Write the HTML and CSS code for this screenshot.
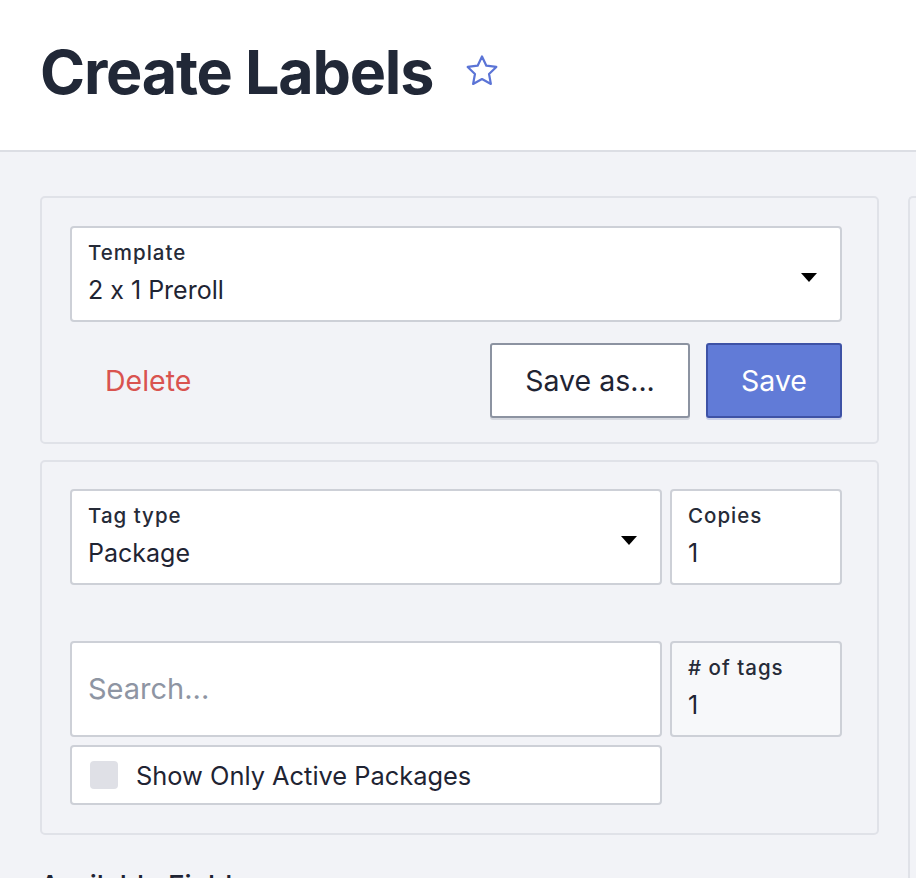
FILE: index.html
```html
<!DOCTYPE html>
<html lang="en">
<head>
<meta charset="utf-8">
<title>Create Labels</title>
<link rel="stylesheet" href="styles.css">
</head>
<body>
<header class="page-header">
  <h1 class="page-title">Create Labels</h1>
  <button class="fav-btn" aria-label="Favorite">
    <svg width="38" height="38" viewBox="0 0 24 24" fill="none" stroke="#5b74d6" stroke-width="1.4" stroke-linejoin="round"><path d="M12 2.8l2.75 5.85 6.3.8-4.6 4.4 1.15 6.3L12 17.1l-5.6 3.05 1.15-6.3-4.6-4.4 6.3-.8z"/></svg>
  </button>
</header>
<main class="layout">
  <div class="left-col">
    <section class="card">
      <div class="field field-select">
        <div class="field-text">
          <span class="field-label">Template</span>
          <span class="field-value">2 x 1 Preroll</span>
        </div>
        <span class="caret"></span>
      </div>
      <div class="actions">
        <button class="btn-link">Delete</button>
        <div class="actions-right">
          <button class="btn btn-secondary">Save as...</button>
          <button class="btn btn-primary">Save</button>
        </div>
      </div>
    </section>
    <section class="card card-tags">
      <div class="row">
        <div class="field field-select grow">
          <div class="field-text">
            <span class="field-label">Tag type</span>
            <span class="field-value">Package</span>
          </div>
          <span class="caret"></span>
        </div>
        <div class="field small">
          <div class="field-text">
            <span class="field-label">Copies</span>
            <span class="field-value">1</span>
          </div>
        </div>
      </div>
      <div class="row row-search">
        <div class="field grow search">
          <span class="placeholder">Search...</span>
        </div>
        <div class="field small disabled">
          <div class="field-text">
            <span class="field-label">#&nbsp;of tags</span>
            <span class="field-value">1</span>
          </div>
        </div>
      </div>
      <div class="row row-check">
        <label class="check-row grow">
          <span class="checkbox"></span>
          <span class="check-text">Show Only Active Packages</span>
        </label>
        <div class="small spacer"></div>
      </div>
    </section>
    <h2 class="section-title">Available Fields</h2>
  </div>
  <div class="right-col">
    <section class="card card-right"></section>
  </div>
</main>
</body>
</html>
```

FILE: styles.css
```css
* { box-sizing: border-box; }
html, body {
  margin: 0;
  padding: 0;
  height: 100%;
  overflow: hidden;
}
body {
  background: #f2f3f7;
  font-family: Inter, "Noto Sans", "Liberation Sans", sans-serif;
  font-feature-settings: "calt" 0;
  color: #1f2433;
}
.page-header {
  background: #ffffff;
  height: 152px;
  border-bottom: 2px solid #dcdee4;
  display: flex;
  align-items: center;
  padding: 0 0 6px 40px;
  gap: 30px;
}
.page-title {
  margin: 0;
  font-size: 61px;
  font-weight: 700;
  letter-spacing: -1.2px;
  color: #212837;
}
.fav-btn {
  background: none;
  border: 0;
  padding: 0;
  margin-top: -2px;
  display: flex;
}
.layout {
  display: grid;
  grid-template-columns: 839px 200px;
  column-gap: 29px;
  padding: 44px 0 0 40px;
}
.card {
  border: 2px solid #e0e2e8;
  border-radius: 5px;
  background: #f2f3f7;
  padding: 28px 35px 24px 28px;
}
.card-tags {
  margin-top: 16px;
  padding: 27px 35px 28px 28px;
}
.card-right {
  height: 700px;
  border-right: 0;
}
.field {
  background: #ffffff;
  border: 2px solid #cdd0d7;
  border-radius: 4px;
  height: 96px;
  display: flex;
  align-items: center;
  padding: 0 16px;
}
.field-text {
  display: flex;
  flex-direction: column;
  gap: 12px;
  margin-top: -3px;
}
.field-label {
  font-size: 20.5px;
  letter-spacing: 1px;
  color: #262b38;
  font-weight: 500;
}
.field-value {
  font-size: 25px;
  color: #1f2433;
  line-height: 1.1;
}
.field-select {
  justify-content: space-between;
  padding-right: 23px;
}
.caret {
  width: 0;
  height: 0;
  border-left: 8px solid transparent;
  border-right: 8px solid transparent;
  border-top: 9px solid #000;
  margin-top: 7px;
}
.actions {
  margin-top: 21px;
  display: flex;
  justify-content: space-between;
  align-items: center;
}
.btn-link {
  background: none;
  border: 0;
  font-family: inherit;
  font-size: 28.5px;
  color: #d9534f;
  padding: 0 0 0 35px;
}
.actions-right {
  display: flex;
  gap: 16px;
}
.btn {
  font-family: inherit;
  font-size: 28.5px;
  height: 75px;
  border-radius: 3px;
  padding: 0;
}
.btn-secondary {
  width: 200px;
  background: #ffffff;
  color: #1f2433;
  border: 2px solid #8c93a1;
  box-shadow: 0 2px 0 #d5d8df;
}
.btn-primary {
  width: 136px;
  background: #617bd7;
  color: #ffffff;
  border: 2px solid #3e52a6;
  box-shadow: 0 2px 0 #c9cfe9;
}
.row {
  display: flex;
  gap: 8px;
}
.row-search {
  margin-top: 56px;
}
.row-check {
  margin-top: 8px;
}
.grow { flex: 1; }
.small { width: 172px; flex: none; }
.disabled { background: #f7f8fa; }
.placeholder {
  font-size: 29px;
  color: #8e95a3;
  margin-top: -2px;
}
.check-row {
  height: 60px;
  background: #ffffff;
  border: 2px solid #cdd0d7;
  border-radius: 4px;
  display: flex;
  align-items: center;
  padding: 0 18px;
  gap: 18px;
}
.checkbox {
  width: 28px;
  height: 28px;
  border-radius: 4px;
  background: #dfe0e6;
  flex: none;
}
.check-text {
  font-size: 25.4px;
  color: #1f2433;
}
.section-title {
  margin: 34px 0 0 0;
  font-size: 28px;
  font-weight: 500;
  color: #1f2433;
}
```
